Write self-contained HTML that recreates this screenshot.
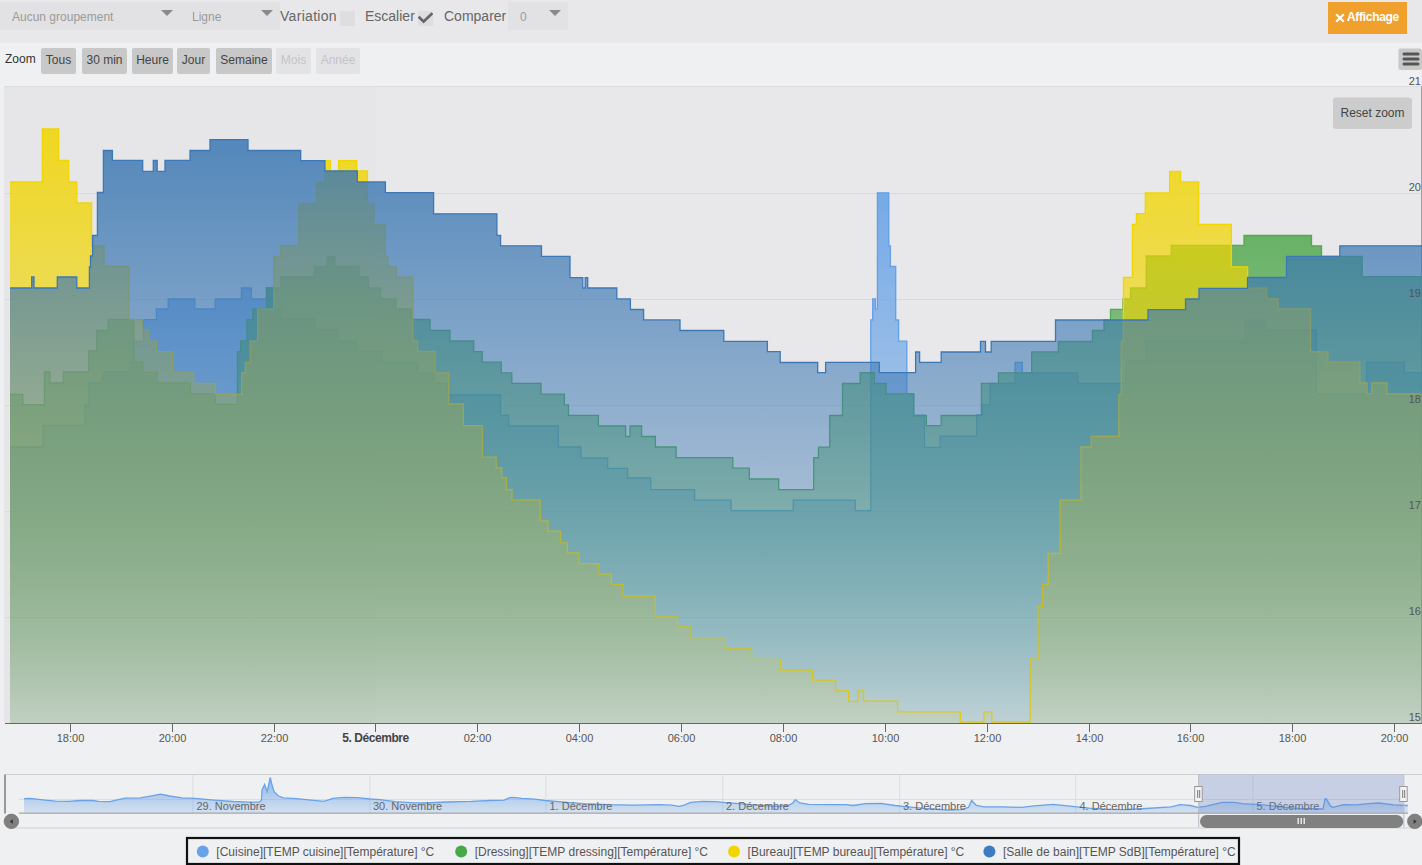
<!DOCTYPE html>
<html><head><meta charset="utf-8"><style>
*{box-sizing:border-box}
body{margin:0;width:1422px;height:865px;overflow:hidden;background:#eff0f2;font-family:"Liberation Sans",sans-serif;position:relative}
.hdr{position:absolute;left:0;top:0;width:1422px;height:43px;background:#e8e8ea}
.sel{position:absolute;top:2px;height:28px;background:#e2e2e4}
.tri{position:absolute;width:0;height:0;border-left:6px solid transparent;border-right:6px solid transparent;border-top:6px solid #8a8a8a}
.t{position:absolute;white-space:nowrap}
.btn{position:absolute;top:48px;height:26px;background:#c8c8c8;border-radius:2px;color:#444;font-size:12px;line-height:25px;text-align:center}
.btn.dis{background:#e3e3e5;color:#c4c4c6}
.cb{position:absolute;top:11px;width:15px;height:15px;background:#dedee0}
</style></head><body>
<div class="hdr">
  <div class="sel" style="left:0;width:280px"></div>
  <div class="t" style="left:12px;top:10px;font-size:12px;color:#9a9a9a">Aucun groupement</div>
  <div class="tri" style="left:161px;top:10px"></div>
  <div class="t" style="left:192px;top:10px;font-size:12px;color:#9a9a9a">Ligne</div>
  <div class="tri" style="left:261px;top:10px"></div>
  <div class="t" style="left:280px;top:8px;font-size:14px;color:#666;letter-spacing:0.3px">Variation</div>
  <div class="cb" style="left:340px"></div>
  <div class="t" style="left:365px;top:8px;font-size:14px;color:#666">Escalier</div>
  <div class="cb" style="left:418px"></div>
  <svg style="position:absolute;left:418px;top:11px" width="15" height="15"><path d="M0.6,5.6 L5.6,10.6 L14.4,2.2" fill="none" stroke="#666" stroke-width="2.7"/></svg>
  <div class="t" style="left:444px;top:8px;font-size:14px;color:#666">Comparer</div>
  <div class="sel" style="left:508px;width:60px"></div>
  <div class="t" style="left:520px;top:10px;font-size:12px;color:#9a9a9a">0</div>
  <div class="tri" style="left:549px;top:10px"></div>
  <div style="position:absolute;left:1328px;top:2px;width:79px;height:32px;background:#f0a02c"></div>
  <svg style="position:absolute;left:1335px;top:12.5px" width="10" height="10"><path d="M1.2,1.2 L8.8,8.8 M8.8,1.2 L1.2,8.8" stroke="#fff" stroke-width="2.2"/></svg>
  <div class="t" style="left:1347px;top:10px;font-size:12px;font-weight:bold;color:#fff;letter-spacing:-0.3px">Affichage</div>
</div>
<div class="t" style="left:5px;top:52px;font-size:12px;color:#333">Zoom</div>
<div class="btn" style="left:41px;width:35px">Tous</div>
<div class="btn" style="left:82px;width:45px">30 min</div>
<div class="btn" style="left:132px;width:41px">Heure</div>
<div class="btn" style="left:177px;width:33px">Jour</div>
<div class="btn" style="left:216px;width:56px">Semaine</div>
<div class="btn dis" style="left:276px;width:35px">Mois</div>
<div class="btn dis" style="left:316px;width:44px">Année</div>
<svg style="position:absolute;left:0;top:0" width="1422" height="865">
<defs><linearGradient id="g_cui" x1="0" y1="0" x2="0" y2="1"><stop offset="0" stop-color="#63a0e6" stop-opacity="0.86"/><stop offset="1" stop-color="#63a0e6" stop-opacity="0.1"/></linearGradient><linearGradient id="g_dre" x1="0" y1="0" x2="0" y2="1"><stop offset="0" stop-color="#53a950" stop-opacity="0.86"/><stop offset="1" stop-color="#53a950" stop-opacity="0.1"/></linearGradient><linearGradient id="g_bur" x1="0" y1="0" x2="0" y2="1"><stop offset="0" stop-color="#f1d500" stop-opacity="0.86"/><stop offset="1" stop-color="#f1d500" stop-opacity="0.1"/></linearGradient><linearGradient id="g_sdb" x1="0" y1="0" x2="0" y2="1"><stop offset="0" stop-color="#3c78b3" stop-opacity="0.86"/><stop offset="1" stop-color="#3c78b3" stop-opacity="0.1"/></linearGradient>
<linearGradient id="nav" x1="0" y1="0" x2="0" y2="1"><stop offset="0" stop-color="#63a0e6" stop-opacity="0.7"/><stop offset="1" stop-color="#63a0e6" stop-opacity="0.2"/></linearGradient>
<clipPath id="plot"><rect x="5" y="86" width="1417" height="637"/></clipPath>
</defs>
<rect x="1398.5" y="48.5" width="23.5" height="21.5" rx="2" fill="#c8c8c8"/>
<rect x="1402.5" y="52.5" width="17" height="3" rx="1.5" fill="#555"/>
<rect x="1402.5" y="57.5" width="17" height="3" rx="1.5" fill="#555"/>
<rect x="1402.5" y="62.5" width="17" height="3" rx="1.5" fill="#555"/>
<rect x="4" y="86" width="1418" height="637" fill="#e8e8ea"/>
<rect x="4" y="86" width="371.5" height="637" fill="#e6e6e8"/>
<rect x="5" y="86" width="1417" height="1" fill="#dcdcde"/>
<rect x="5" y="193" width="1417" height="1" fill="#dadadc"/><rect x="5" y="299" width="1417" height="1" fill="#dadadc"/><rect x="5" y="405" width="1417" height="1" fill="#dadadc"/><rect x="5" y="511" width="1417" height="1" fill="#dadadc"/><rect x="5" y="617" width="1417" height="1" fill="#dadadc"/>
<rect x="1421" y="86" width="1" height="637" fill="#a0a0a0"/>
<g clip-path="url(#plot)">
<path d="M10,723.0L10,447H43V425.4H84.7V404.6H88.8V383H102.7V372H130.4V362H133.8V341.2H143.5V319.7H156.4V309H168.2V299H194.8V309H215.2V299H241.4V288H251.4V299H266.5V288H273.8V309H281.8V319H315V330H338V341H357V351.4H382.2V362.3H417V373H434V383.3H447.7V394.8H500.5V415.3H508.6V426H558.3V447H581V457.8H607.6V468.3H627.6V478H650.7V489.6H694.6V500.1H731.2V510.6H793.3V500.1H855.3V510.6H870.8V320H872.7V298.9H875.4V309.1H877.4V192.8H888.8V245.8H890.4V266.5H895.7V320H898.6V341.2H906.8V393.9H913.7V415.5H924.5V447.3H940.2V436.1H976.6V415H982V404.6H990V383.4H1015V362.5H1022.3V372.8H1077.8V383.4H1125.7V361H1146V341H1245V320H1265V330H1316.3V394H1366.7V362.2H1404.2V372.6H1422.0V723.0Z" fill="url(#g_cui)"/><path d="M10,447H43V425.4H84.7V404.6H88.8V383H102.7V372H130.4V362H133.8V341.2H143.5V319.7H156.4V309H168.2V299H194.8V309H215.2V299H241.4V288H251.4V299H266.5V288H273.8V309H281.8V319H315V330H338V341H357V351.4H382.2V362.3H417V373H434V383.3H447.7V394.8H500.5V415.3H508.6V426H558.3V447H581V457.8H607.6V468.3H627.6V478H650.7V489.6H694.6V500.1H731.2V510.6H793.3V500.1H855.3V510.6H870.8V320H872.7V298.9H875.4V309.1H877.4V192.8H888.8V245.8H890.4V266.5H895.7V320H898.6V341.2H906.8V393.9H913.7V415.5H924.5V447.3H940.2V436.1H976.6V415H982V404.6H990V383.4H1015V362.5H1022.3V372.8H1077.8V383.4H1125.7V361H1146V341H1245V320H1265V330H1316.3V394H1366.7V362.2H1404.2V372.6H1422.0" fill="none" stroke="#63a0e6" stroke-width="1.3"/><path d="M10,723.0L10,394.3H22.8V404.6H44.4V372H50V383H63.3V372H88.8V351H96.6V330.5H108.2V319.4H133.8V362H142.7V372.3H157V382.8H190.4V393.8H215.5V404.3H237.4V351.7H240.6V341H247V319.7H252.7V309H266.5V288H281V277H314.2V266.5H327.2V256.4H334.8V266.5H359V277H368.4V287.8H380.6V298.8H395.9V309H411.3V319.5H430V330.4H450V341H473.7V351.7H482.2V362.2H501.3V372.9H511.8V383.4H541V394.2H564.4V404.8H568.5V415.3H598.4V426H625.6V436.5H630V426H641.6V436.5H655.4V447H676.1V457.7H732.8V468.2H749.3V479H778.7V489.6H813.7V457.7H818.5V447.2H829.7V415.5H842.5V383.5H860.2V372.7H874.3V383.5H886.1V393.9H913.7V415.5H926.4V425.7H941.2V415.5H981.4V383.4H998.5V372.8H1031.7V351.8H1058.4V341.5H1092.4V330.5H1104V320H1110.5V309.4H1123V299H1130.6V288H1146.3V256H1171.2V245.3H1244V235.5H1311.5V245.8H1321.5V256.3H1362.2V276.6H1422.0V723.0Z" fill="url(#g_dre)"/><path d="M10,394.3H22.8V404.6H44.4V372H50V383H63.3V372H88.8V351H96.6V330.5H108.2V319.4H133.8V362H142.7V372.3H157V382.8H190.4V393.8H215.5V404.3H237.4V351.7H240.6V341H247V319.7H252.7V309H266.5V288H281V277H314.2V266.5H327.2V256.4H334.8V266.5H359V277H368.4V287.8H380.6V298.8H395.9V309H411.3V319.5H430V330.4H450V341H473.7V351.7H482.2V362.2H501.3V372.9H511.8V383.4H541V394.2H564.4V404.8H568.5V415.3H598.4V426H625.6V436.5H630V426H641.6V436.5H655.4V447H676.1V457.7H732.8V468.2H749.3V479H778.7V489.6H813.7V457.7H818.5V447.2H829.7V415.5H842.5V383.5H860.2V372.7H874.3V383.5H886.1V393.9H913.7V415.5H926.4V425.7H941.2V415.5H981.4V383.4H998.5V372.8H1031.7V351.8H1058.4V341.5H1092.4V330.5H1104V320H1110.5V309.4H1123V299H1130.6V288H1146.3V256H1171.2V245.3H1244V235.5H1311.5V245.8H1321.5V256.3H1362.2V276.6H1422.0" fill="none" stroke="#53a950" stroke-width="1.3"/><path d="M10,723.0L10,182H42.3V129H58.7V160.4H68.7V182H76.8V203H91.6V246H104V266.5H128.9V319.7H142.7V330.2H148.8V341.2H156.4V351.7H172.6V373H193.6V383.3H215.5V394.3H241.7V373H245.4V362.5H250.3V341.2H257.6V309.1H273.8V256.4H280.6V245.7H298.9V203.3H316.4V181.9H324.9V160.6H330.4V171H338.6V160.6H356.7V171H367.5V203.3H374V224.5H385.4V256.4H387.8V266.8H396.2V277.2H412.8V341H417.7V351.4H435V373H448.6V404H463.4V425.7H482.3V457.2H496.2V467.8H501.8V478H506.4V489.6H512V500.2H540.1V521H548V531.2H560.5V542.8H567.4V553H579V563.6H598.9V574.2H611.4V584.4H623V596H655.3V616.8H677.5V627H690V637.6H723.8V648.2H751.5V659.3H780.2V670H812.6V680.1H835.7V690.8H848.7V701.4H857.9V690.8H863.6V701.2H897.6V711.8H960.3V722H983.9V711.9H991.8V722H1030.1V659.2H1038V606.5H1042.6V584.3H1048.2V553.3H1060.2V500.1H1081V447H1091.2V436.3H1118.9V394.7H1121.2V341.5H1123.4V277.4H1132.4V224.3H1136.4V213.7H1145.3V192.9H1169.6V171.3H1180.6V181.9H1198.7V224.3H1231.4V266.8H1247.6V288.2H1266.6V298.6H1278.2V309H1310.5V351.8H1327.9V362.2H1359.8V383H1367.2V393.9H1371.8V383H1386.9V393.9H1422.0V723.0Z" fill="url(#g_bur)"/><path d="M10,182H42.3V129H58.7V160.4H68.7V182H76.8V203H91.6V246H104V266.5H128.9V319.7H142.7V330.2H148.8V341.2H156.4V351.7H172.6V373H193.6V383.3H215.5V394.3H241.7V373H245.4V362.5H250.3V341.2H257.6V309.1H273.8V256.4H280.6V245.7H298.9V203.3H316.4V181.9H324.9V160.6H330.4V171H338.6V160.6H356.7V171H367.5V203.3H374V224.5H385.4V256.4H387.8V266.8H396.2V277.2H412.8V341H417.7V351.4H435V373H448.6V404H463.4V425.7H482.3V457.2H496.2V467.8H501.8V478H506.4V489.6H512V500.2H540.1V521H548V531.2H560.5V542.8H567.4V553H579V563.6H598.9V574.2H611.4V584.4H623V596H655.3V616.8H677.5V627H690V637.6H723.8V648.2H751.5V659.3H780.2V670H812.6V680.1H835.7V690.8H848.7V701.4H857.9V690.8H863.6V701.2H897.6V711.8H960.3V722H983.9V711.9H991.8V722H1030.1V659.2H1038V606.5H1042.6V584.3H1048.2V553.3H1060.2V500.1H1081V447H1091.2V436.3H1118.9V394.7H1121.2V341.5H1123.4V277.4H1132.4V224.3H1136.4V213.7H1145.3V192.9H1169.6V171.3H1180.6V181.9H1198.7V224.3H1231.4V266.8H1247.6V288.2H1266.6V298.6H1278.2V309H1310.5V351.8H1327.9V362.2H1359.8V383H1367.2V393.9H1371.8V383H1386.9V393.9H1422.0" fill="none" stroke="#f1d500" stroke-width="1.3"/><path d="M10,723.0L10,288H31.7V277H34V288H57.3V277H76.8V288H89.4V267H90.5V256H92.6V235.5H97.4V192.5H103.4V150.5H112.4V160.4H142.7V171.3H153.3V160.4H157.2V171.3H165V160.4H190V150.5H210V139.6H248V150.5H300.7V160.6H324.9V171H357.3V181.9H385.4V192.7H433.6V213.8H496.9V235.4H500.6V245.8H541.5V256.4H570V277.6H582.8V288H585.2V277.6H587.7V288H616.8V298.9H630.4V309.5H643.6V319.9H680V330.5H723.8V341.3H767.4V351.7H780.2V362.5H817.7V372.7H825.6V362.4H879.3V372.7H915.6V352H919.6V362.4H941.2V352H980.5V341.4H985.5V352H991.2V341.4H1055.5V320H1148V309.7H1185.5V299H1199V288.4H1247.5V277.5H1286.5V256.3H1339.8V245.8H1422.0V723.0Z" fill="url(#g_sdb)"/><path d="M10,288H31.7V277H34V288H57.3V277H76.8V288H89.4V267H90.5V256H92.6V235.5H97.4V192.5H103.4V150.5H112.4V160.4H142.7V171.3H153.3V160.4H157.2V171.3H165V160.4H190V150.5H210V139.6H248V150.5H300.7V160.6H324.9V171H357.3V181.9H385.4V192.7H433.6V213.8H496.9V235.4H500.6V245.8H541.5V256.4H570V277.6H582.8V288H585.2V277.6H587.7V288H616.8V298.9H630.4V309.5H643.6V319.9H680V330.5H723.8V341.3H767.4V351.7H780.2V362.5H817.7V372.7H825.6V362.4H879.3V372.7H915.6V352H919.6V362.4H941.2V352H980.5V341.4H985.5V352H991.2V341.4H1055.5V320H1148V309.7H1185.5V299H1199V288.4H1247.5V277.5H1286.5V256.3H1339.8V245.8H1422.0" fill="none" stroke="#3c78b6" stroke-width="1.3"/>
</g>
<rect x="5" y="723" width="1417" height="1" fill="#666"/>
<rect x="70" y="723" width="1" height="9" fill="#666"/><rect x="172" y="723" width="1" height="9" fill="#666"/><rect x="274" y="723" width="1" height="9" fill="#666"/><rect x="375" y="723" width="1" height="9" fill="#666"/><rect x="477" y="723" width="1" height="9" fill="#666"/><rect x="579" y="723" width="1" height="9" fill="#666"/><rect x="681" y="723" width="1" height="9" fill="#666"/><rect x="783" y="723" width="1" height="9" fill="#666"/><rect x="885" y="723" width="1" height="9" fill="#666"/><rect x="987" y="723" width="1" height="9" fill="#666"/><rect x="1089" y="723" width="1" height="9" fill="#666"/><rect x="1190" y="723" width="1" height="9" fill="#666"/><rect x="1292" y="723" width="1" height="9" fill="#666"/><rect x="1394" y="723" width="1" height="9" fill="#666"/>
<g font-size="11" fill="#555"><text x="70.5" y="742" text-anchor="middle">18:00</text><text x="172.5" y="742" text-anchor="middle">20:00</text><text x="274.5" y="742" text-anchor="middle">22:00</text><text x="375.5" y="742" text-anchor="middle" font-weight="bold" fill="#444" font-size="12" letter-spacing="-0.45">5. Décembre</text><text x="477.5" y="742" text-anchor="middle">02:00</text><text x="579.5" y="742" text-anchor="middle">04:00</text><text x="681.5" y="742" text-anchor="middle">06:00</text><text x="783.5" y="742" text-anchor="middle">08:00</text><text x="885.5" y="742" text-anchor="middle">10:00</text><text x="987.5" y="742" text-anchor="middle">12:00</text><text x="1089.5" y="742" text-anchor="middle">14:00</text><text x="1190.5" y="742" text-anchor="middle">16:00</text><text x="1292.5" y="742" text-anchor="middle">18:00</text><text x="1394.5" y="742" text-anchor="middle">20:00</text></g>
<g font-size="11" fill="#555"><text x="1421" y="85" text-anchor="end">21</text><text x="1421" y="191" text-anchor="end">20</text><text x="1421" y="297" text-anchor="end">19</text><text x="1421" y="403" text-anchor="end">18</text><text x="1421" y="509" text-anchor="end">17</text><text x="1421" y="615" text-anchor="end">16</text><text x="1421" y="721" text-anchor="end">15</text></g>
<rect x="1333" y="97.5" width="79" height="31.5" rx="3" fill="#cccccc"/>
<text x="1372.5" y="116.8" font-size="12" fill="#444" text-anchor="middle">Reset zoom</text>

<rect x="5" y="774" width="1417" height="1" fill="#cfcfd1"/>
<rect x="192.4" y="774.5" width="1" height="38.5" fill="#dcdcde"/><rect x="369.5" y="774.5" width="1" height="38.5" fill="#dcdcde"/><rect x="545.4" y="774.5" width="1" height="38.5" fill="#dcdcde"/><rect x="722.3" y="774.5" width="1" height="38.5" fill="#dcdcde"/><rect x="899.2" y="774.5" width="1" height="38.5" fill="#dcdcde"/><rect x="1075.2" y="774.5" width="1" height="38.5" fill="#dcdcde"/><rect x="1252.4" y="774.5" width="1" height="38.5" fill="#dcdcde"/>
<rect x="19" y="799" width="1389" height="1" fill="#dddddf"/>
<path d="M24,798.6 L30.1,798.3 L42.8,799.8 L55.4,801.1 L68,801.4 L80.8,800.5 L92.2,800.5 L98.5,801.4 L110,801.7 L116.2,800.1 L125,798.2 L140.3,797.9 L149,796.3 L160.5,794.2 L169.4,796 L182,797.9 L195,798.4 L214,800.1 L233,801.5 L248.2,802.1 L259.6,802.1 L261.5,799.8 L262.1,789.7 L264.6,784.4 L267.2,791.6 L270.3,777.3 L271.6,783.4 L274.1,791.6 L278.5,796 L283.6,797.9 L296.3,798.6 L309,799.8 L324.1,801.4 L333,798.3 L344.4,797.3 L357,797.7 L370,799 L380.1,799.6 L395.3,801.7 L414.3,802.8 L427,803 L446,802 L471.3,801.4 L490.3,800.5 L504.2,800.1 L510.5,797.3 L515.6,797.6 L521.9,798.3 L534.6,799.2 L545,800.5 L564,802.1 L583,803.6 L608.3,804.7 L633.6,805.2 L659,804.7 L671.6,805.2 L679.2,806.4 L684.2,805.2 L690.6,802.4 L703.2,801.4 L715.9,801.7 L720,802.1 L739,803.6 L758,805.2 L777,806.4 L788.4,805.5 L792.8,803 L795.3,799.6 L799.7,803 L808.6,804.3 L827.6,804.7 L846.6,804.7 L852.9,805.5 L865.6,803.6 L880.8,803.4 L895,805.5 L907.7,806.8 L926.6,808.7 L948.2,810.2 L960.8,809.7 L968.4,807.4 L971.6,800.5 L976,805.2 L983.6,806.8 L1002.6,806.8 L1021.6,807.4 L1034.2,805.9 L1053.2,804.3 L1070,806.2 L1089,808.1 L1108,809.3 L1127,809.7 L1146,808.5 L1171.3,806.8 L1180.1,804.7 L1190.3,805.5 L1197.8,807.4 L1205.4,806.4 L1221.9,802.4 L1234.6,802.4 L1242,803.6 L1261,804.7 L1280,806.8 L1299,808.5 L1323,809 L1324.9,799.2 L1326.2,798.6 L1330.6,806.2 L1333.1,807.4 L1343.3,804.7 L1355.9,804.9 L1368.6,803.6 L1378.7,803 L1393.9,804.9 L1407.8,805.5 L1407.8,813 L24,813 Z" fill="url(#nav)"/>
<path d="M24,798.6 L30.1,798.3 L42.8,799.8 L55.4,801.1 L68,801.4 L80.8,800.5 L92.2,800.5 L98.5,801.4 L110,801.7 L116.2,800.1 L125,798.2 L140.3,797.9 L149,796.3 L160.5,794.2 L169.4,796 L182,797.9 L195,798.4 L214,800.1 L233,801.5 L248.2,802.1 L259.6,802.1 L261.5,799.8 L262.1,789.7 L264.6,784.4 L267.2,791.6 L270.3,777.3 L271.6,783.4 L274.1,791.6 L278.5,796 L283.6,797.9 L296.3,798.6 L309,799.8 L324.1,801.4 L333,798.3 L344.4,797.3 L357,797.7 L370,799 L380.1,799.6 L395.3,801.7 L414.3,802.8 L427,803 L446,802 L471.3,801.4 L490.3,800.5 L504.2,800.1 L510.5,797.3 L515.6,797.6 L521.9,798.3 L534.6,799.2 L545,800.5 L564,802.1 L583,803.6 L608.3,804.7 L633.6,805.2 L659,804.7 L671.6,805.2 L679.2,806.4 L684.2,805.2 L690.6,802.4 L703.2,801.4 L715.9,801.7 L720,802.1 L739,803.6 L758,805.2 L777,806.4 L788.4,805.5 L792.8,803 L795.3,799.6 L799.7,803 L808.6,804.3 L827.6,804.7 L846.6,804.7 L852.9,805.5 L865.6,803.6 L880.8,803.4 L895,805.5 L907.7,806.8 L926.6,808.7 L948.2,810.2 L960.8,809.7 L968.4,807.4 L971.6,800.5 L976,805.2 L983.6,806.8 L1002.6,806.8 L1021.6,807.4 L1034.2,805.9 L1053.2,804.3 L1070,806.2 L1089,808.1 L1108,809.3 L1127,809.7 L1146,808.5 L1171.3,806.8 L1180.1,804.7 L1190.3,805.5 L1197.8,807.4 L1205.4,806.4 L1221.9,802.4 L1234.6,802.4 L1242,803.6 L1261,804.7 L1280,806.8 L1299,808.5 L1323,809 L1324.9,799.2 L1326.2,798.6 L1330.6,806.2 L1333.1,807.4 L1343.3,804.7 L1355.9,804.9 L1368.6,803.6 L1378.7,803 L1393.9,804.9 L1407.8,805.5" fill="none" stroke="#6aa2e8" stroke-width="1.3"/>
<g font-size="11" fill="#666"><text x="196.5" y="810">29. Novembre</text><text x="373" y="810">30. Novembre</text><text x="549.5" y="810">1. Décembre</text><text x="726" y="810">2. Décembre</text><text x="903" y="810">3. Décembre</text><text x="1079.5" y="810">4. Décembre</text><text x="1256.5" y="810">5. Décembre</text></g>
<rect x="1198.5" y="774.5" width="205" height="38.5" fill="#6685c2" fill-opacity="0.3"/>
<rect x="1198.2" y="774.5" width="1" height="53" fill="#b8bcc6"/>
<rect x="1403.3" y="774.5" width="1" height="53" fill="#b8bcc6"/>
<rect x="4" y="774.5" width="2" height="39" fill="#9a9a9a"/>
<rect x="19" y="812.5" width="1389" height="1.3" fill="#a8a8a8"/>
<rect x="15" y="827.5" width="1400" height="1" fill="#d2d2d4"/>
<rect x="1194.7" y="786.5" width="7.5" height="15" fill="#f4f4f4" stroke="#999" stroke-width="1"/><rect x="1197.2" y="790" width="1" height="8" fill="#777"/><rect x="1199.2" y="790" width="1" height="8" fill="#777"/>
<rect x="1399.7" y="786.5" width="7.5" height="15" fill="#f4f4f4" stroke="#999" stroke-width="1"/><rect x="1402.2" y="790" width="1" height="8" fill="#777"/><rect x="1404.2" y="790" width="1" height="8" fill="#777"/>
<rect x="1200" y="815" width="203.3" height="13" rx="6.5" fill="#808080"/>
<rect x="1297.5" y="818" width="1.4" height="6" fill="#eee"/><rect x="1300.5" y="818" width="1.4" height="6" fill="#eee"/><rect x="1303.5" y="818" width="1.4" height="6" fill="#eee"/>
<circle cx="11.4" cy="821.4" r="7.3" fill="#808080" stroke="#6a6a6a" stroke-width="0.6"/>
<path d="M9.8,821.6 L12.8,819.2 L12.8,824 Z" fill="#333"/>
<circle cx="1414.8" cy="821.4" r="7.3" fill="#808080" stroke="#6a6a6a" stroke-width="0.6"/>
<path d="M1416.6,821.6 L1413.6,819.2 L1413.6,824 Z" fill="#333"/>


<rect x="187" y="838" width="1052" height="26" fill="none" stroke="#111" stroke-width="2.2"/>
<g font-size="12" fill="#555">
<circle cx="202.8" cy="851.4" r="6" fill="#68a2e8"/><text x="216.3" y="855.6">[Cuisine][TEMP cuisine][Température] °C</text>
<circle cx="461.2" cy="851.4" r="6" fill="#4aa84c"/><text x="474.7" y="855.6">[Dressing][TEMP dressing][Température] °C</text>
<circle cx="734" cy="851.4" r="6" fill="#f2d600"/><text x="747.6" y="855.6">[Bureau][TEMP bureau][Température] °C</text>
<circle cx="989.4" cy="851.4" r="6" fill="#3e7cc2"/><text x="1003" y="855.6">[Salle de bain][TEMP SdB][Température] °C</text>
</g>

</svg>
</body></html>
